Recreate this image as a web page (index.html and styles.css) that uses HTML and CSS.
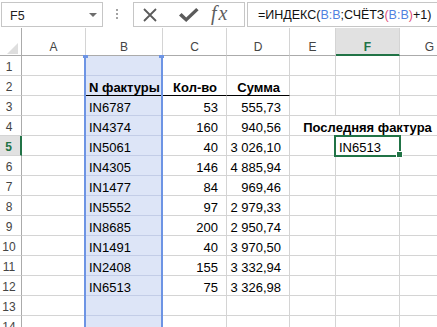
FILE: index.html
```html
<!DOCTYPE html>
<html>
<head>
  <meta charset="UTF-8"/>
  <title>Последняя фактура</title>
  <link rel="stylesheet" href="styles.css">
</head>
<body>
  <div class="toolbar">
    <div class="namebox"><span>F5</span><i class="caret"></i></div>
    <div class="grip"><i></i><i></i><i></i></div>
    <div class="buttons">
      <svg class="btn-cancel" width="14" height="14" viewBox="0 0 14 14">
        <path d="M1 1 L13 13 M13 1 L1 13" stroke="#5b5b5b" stroke-width="1.8" fill="none"/>
      </svg>
      <svg class="btn-enter" width="20" height="14" viewBox="0 0 20 14">
        <polygon points="0,7.5 2.6,5 7.2,9.4 17.2,0 19.6,2.2 7.2,14" fill="#5b5b5b"/>
      </svg>
      <span class="fx">fx</span>
    </div>
    <div class="formula">=ИНДЕКС(<span class="ref">B:B</span>;СЧЁТЗ<span class="par">(</span><span class="ref">B:B</span><span class="par">)</span>+1)</div>
  </div>

  <div class="sheet">
    <div class="corner"><i></i></div>
    <div class="ch">A</div><div class="ch">B</div><div class="ch">C</div><div class="ch">D</div>
    <div class="ch">E</div><div class="ch sel">F</div><div class="ch">G</div>

    <div class="rh">1</div><div class="c"></div><div class="c b"></div><div class="c"></div><div class="c"></div><div class="c"></div><div class="c"></div><div class="c"></div>
    <div class="rh">2</div><div class="c"></div><div class="c b th">N фактуры</div><div class="c r th">Кол-во</div><div class="c r th">Сумма</div><div class="c"></div><div class="c"></div><div class="c"></div>
    <div class="rh">3</div><div class="c"></div><div class="c b">IN6787</div><div class="c r">53</div><div class="c r">555,73</div><div class="c"></div><div class="c"></div><div class="c"></div>
    <div class="rh">4</div><div class="c"></div><div class="c b">IN4374</div><div class="c r">160</div><div class="c r">940,56</div><div class="c nr"></div><div class="c nr mid bold">Последняя фактура</div><div class="c"></div>
    <div class="rh sel">5</div><div class="c"></div><div class="c b">IN5061</div><div class="c r">40</div><div class="c r">3 026,10</div><div class="c"></div><div class="c active">IN6513</div><div class="c"></div>
    <div class="rh">6</div><div class="c"></div><div class="c b">IN4305</div><div class="c r">146</div><div class="c r">4 885,94</div><div class="c"></div><div class="c"></div><div class="c"></div>
    <div class="rh">7</div><div class="c"></div><div class="c b">IN1477</div><div class="c r">84</div><div class="c r">969,46</div><div class="c"></div><div class="c"></div><div class="c"></div>
    <div class="rh">8</div><div class="c"></div><div class="c b">IN5552</div><div class="c r">97</div><div class="c r">2 979,33</div><div class="c"></div><div class="c"></div><div class="c"></div>
    <div class="rh">9</div><div class="c"></div><div class="c b">IN8685</div><div class="c r">200</div><div class="c r">2 950,74</div><div class="c"></div><div class="c"></div><div class="c"></div>
    <div class="rh">10</div><div class="c"></div><div class="c b">IN1491</div><div class="c r">40</div><div class="c r">3 970,50</div><div class="c"></div><div class="c"></div><div class="c"></div>
    <div class="rh">11</div><div class="c"></div><div class="c b">IN2408</div><div class="c r">155</div><div class="c r">3 332,94</div><div class="c"></div><div class="c"></div><div class="c"></div>
    <div class="rh">12</div><div class="c"></div><div class="c b">IN6513</div><div class="c r">75</div><div class="c r">3 326,98</div><div class="c"></div><div class="c"></div><div class="c"></div>
    <div class="rh">13</div><div class="c"></div><div class="c b"></div><div class="c"></div><div class="c"></div><div class="c"></div><div class="c"></div><div class="c"></div>
    <div class="rh">14</div><div class="c"></div><div class="c b"></div><div class="c"></div><div class="c"></div><div class="c"></div><div class="c"></div><div class="c"></div>

    <!-- range B:B highlighted by the formula -->
    <div class="range"><i class="hl"></i><i class="hr"></i></div>
  </div>
</body>
</html>
```

FILE: styles.css
```css
body {
    margin: 0;
    width: 437px;
    height: 327px;
    overflow: hidden;
    background-color: #fff;
    font-family: "Liberation Sans", Arial, sans-serif;
}
/* formula bar */
.toolbar {
    display: flex;
    align-items: flex-start;
    height: 28px;
    padding-top: 2px;
    box-sizing: border-box;
}
.namebox {
    margin-left: 1px;
    width: 102px;
    height: 25px;
    border: 1px solid #c6c6c6;
    box-sizing: border-box;
    display: flex;
    align-items: center;
    justify-content: space-between;
    padding: 2px 5px 0 8px;
    font-size: 12.5px;
    color: #222;
}
.caret {
    width: 0;
    height: 0;
    border-left: 4px solid transparent;
    border-right: 4px solid transparent;
    border-top: 4px solid #6d6d6d;
    margin-top: -2px;
}
.grip {
    display: flex;
    flex-direction: column;
    gap: 2px;
    margin-left: 13px;
    padding-top: 7px;
}
.grip i {
    width: 2px;
    height: 2px;
    background-color: #a3a3a3;
}
.buttons {
    margin-left: 15px;
    width: 112px;
    height: 25px;
    border: 1px solid #c6c6c6;
    box-sizing: border-box;
    display: flex;
    align-items: center;
    padding-left: 9px;
}
.btn-enter {
    margin-left: 22px;
    margin-top: 1px;
}
.fx {
    margin-left: 12px;
    font-family: "Liberation Serif", serif;
    font-style: italic;
    font-size: 20px;
    letter-spacing: 2px;
    color: #5e5e5e;
    margin-top: -2px;
}
.formula {
    margin-left: 2px;
    flex: 1;
    height: 25px;
    border: 1px solid #c6c6c6;
    border-right: none;
    box-sizing: border-box;
    padding: 3px 0 0 10px;
    line-height: 19px;
    font-size: 12.5px;
    color: #111;
    white-space: nowrap;
}
.formula .ref {
    color: #4f81e0;
}
.formula .par {
    color: #e0507a;
}
/* worksheet */
.sheet {
    position: relative;
    display: grid;
    width: 437px;
    overflow: hidden;
    grid-template-columns: 22px 64px 77px 64px 63px 46px 64px 60px;
    grid-template-rows: 28px;
    grid-auto-rows: 20px;
}
.corner, .ch, .rh, .c {
    box-sizing: border-box;
}
.corner {
    display: flex;
    align-items: flex-end;
    justify-content: flex-end;
    padding: 0 3px 1px 0;
    border-right: 1px solid #ababab;
    border-bottom: 1px solid #ababab;
}
.corner i {
    width: 0;
    height: 0;
    border-left: 11px solid transparent;
    border-bottom: 11px solid #dedede;
}
.ch {
    display: flex;
    align-items: flex-end;
    justify-content: center;
    padding-bottom: 1px;
    line-height: 14px;
    font-size: 12px;
    color: #444;
    border-right: 1px solid #d4d4d4;
    border-bottom: 1px solid #ababab;
}
.ch.sel {
    background-color: #e1e1e1;
    color: #217346;
    font-weight: bold;
    border-bottom: 2px solid #217346;
    padding-bottom: 0;
}
.rh {
    padding: 4px 3px 0 0;
    line-height: 15px;
    text-align: center;
    font-size: 12px;
    color: #444;
    border-right: 1px solid #ababab;
    border-bottom: 1px solid #d4d4d4;
}
.rh.sel {
    background-color: #e1e1e1;
    color: #217346;
    font-weight: bold;
    border-right: 2px solid #217346;
}
.c {
    display: flex;
    padding: 4px 3px 0 3px;
    line-height: 15px;
    font-size: 13px;
    color: #000;
    white-space: nowrap;
    border-right: 1px solid #d4d4d4;
    border-bottom: 1px solid #d4d4d4;
}
.c.b {
    background-color: #dde5f7;
    border-bottom-color: #c3cde7;
}
.c.r {
    justify-content: flex-end;
    padding-right: 8px;
}
.c.th {
    font-weight: bold;
    border-bottom-color: #000;
}
.c.r.th {
    padding-right: 9px;
}
.c.nr {
    border-right-color: transparent;
}
.c.mid {
    justify-content: center;
}
.bold {
    font-weight: bold;
}
/* active cell F5 */
.c.active {
    position: relative;
}
.c.active::before {
    content: "";
    position: absolute;
    left: -2px;
    top: -1px;
    right: -2px;
    bottom: -2px;
    border: 2px solid #217346;
}
.c.active::after {
    content: "";
    position: absolute;
    left: 60px;
    top: 15px;
    width: 7px;
    height: 7px;
    box-sizing: border-box;
    background-color: #217346;
    border: 1px solid #fff;
}
.range {
    position: absolute;
    left: 84px;
    top: 27px;
    width: 79px;
    bottom: 0;
    border-left: 2px solid #6d94e4;
    border-right: 2px solid #6d94e4;
    box-sizing: border-box;
}
.range i {
    position: absolute;
    top: 0;
    width: 5px;
    height: 3px;
    background-color: #6d94e4;
}
.range .hl {
    left: -3px;
}
.range .hr {
    right: -3px;
}
```
